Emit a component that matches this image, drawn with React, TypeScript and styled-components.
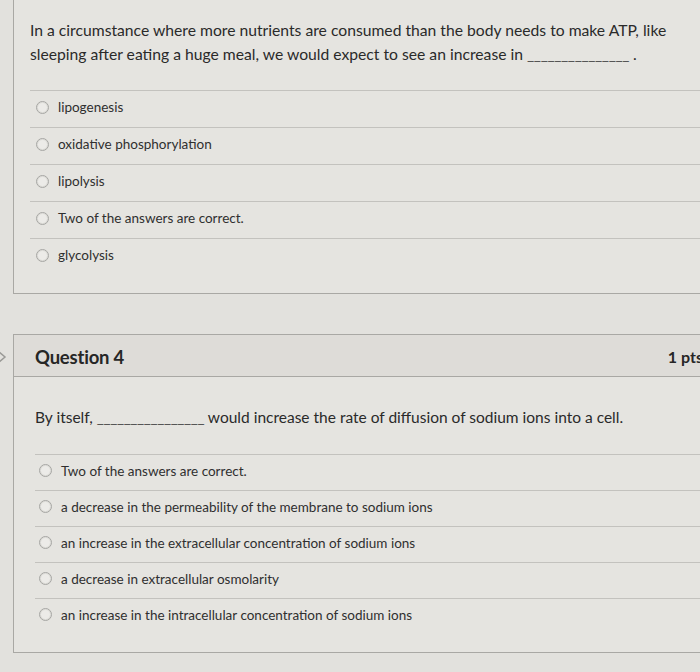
import React from "react";
import styled, { createGlobalStyle } from "styled-components";

const Global = createGlobalStyle`
  html, body { margin: 0; padding: 0; }
  body {
    background: #e2e1dd;
    font-family: Lato, "Open Sans", Arial, sans-serif;
    color: #2e2e2e;
    overflow: hidden;
    width: 700px;
    height: 672px;
  }
`;

const Page = styled.div`
  display: flex;
  flex-direction: column;
  width: 700px;
`;

const QuestionRow = styled.div<{ $gapTop?: number }>`
  display: flex;
  margin-top: ${(p) => p.$gapTop ?? 0}px;
`;

const Gutter = styled.div`
  width: 13px;
  flex: none;
  display: flex;
  flex-direction: column;
`;

const ChevronSlot = styled.div`
  height: 46px;
  display: flex;
  align-items: center;
`;

const Card = styled.div<{ $open?: boolean }>`
  flex: none;
  width: 694px;
  background: #e5e4e0;
  border: 1px solid #a9a8a4;
  border-top-width: ${(p) => (p.$open ? 0 : 1)}px;
`;

const Header = styled.div`
  height: 42px;
  display: flex;
  align-items: center;
  justify-content: space-between;
  padding: 2px 5px 0 21px;
  box-sizing: border-box;
  background: #dedcd8;
  border-bottom: 1px solid #a9a8a4;
`;

const Title = styled.div`
  font-size: 18.5px;
  font-weight: 700;
  color: #262626;
  letter-spacing: -0.2px;
`;

const Points = styled.div`
  font-size: 16px;
  font-weight: 700;
  color: #262626;
  white-space: nowrap;
`;

const Body = styled.div<{ $pt: number; $pl: number }>`
  padding: ${(p) => p.$pt}px 0 18px ${(p) => p.$pl}px;
`;

const Prompt = styled.div<{ $gap: number; $size: number }>`
  font-size: ${(p) => p.$size}px;
  line-height: 24px;
  color: #2a2a2a;
  padding-right: 20px;
  margin-bottom: ${(p) => p.$gap}px;
`;

const Blank = styled.span`
  letter-spacing: -0.4px;
  color: #555;
`;

const Answers = styled.div``;

const Answer = styled.div<{ $h: number; $pl: number }>`
  height: ${(p) => p.$h}px;
  box-sizing: border-box;
  border-top: 1px solid #c3c2be;
  display: flex;
  align-items: center;
  padding-left: ${(p) => p.$pl}px;
  padding-bottom: 4px;
  gap: 9px;
  font-size: 13.5px;
  color: #2f2f2f;
`;

const Radio = styled.span`
  width: 11px;
  height: 11px;
  border-radius: 50%;
  border: 1px solid #a6a6a3;
  background: #ecebe8;
  box-shadow: inset 0 0 0 1px #dcdbd7;
  flex: none;
`;

const q1 = [
  "lipogenesis",
  "oxidative phosphorylation",
  "lipolysis",
  "Two of the answers are correct.",
  "glycolysis",
];

const q4 = [
  "Two of the answers are correct.",
  "a decrease in the permeability of the membrane to sodium ions",
  "an increase in the extracellular concentration of sodium ions",
  "a decrease in extracellular osmolarity",
  "an increase in the intracellular concentration of sodium ions",
];

export default function App() {
  return (
    <>
      <Global />
      <Page>
        <QuestionRow>
          <Gutter />
          <Card $open>
            <Body $pt={18} $pl={16}>
              <Prompt $gap={24} $size={15.7}>
                In a circumstance where more nutrients are consumed than the body needs to make ATP, like
                sleeping after eating a huge meal, we would expect to see an increase in{" "}
                <Blank>_______________</Blank> .
              </Prompt>
              <Answers>
                {q1.map((a) => (
                  <Answer key={a} $h={37} $pl={6}>
                    <Radio />
                    <span>{a}</span>
                  </Answer>
                ))}
              </Answers>
            </Body>
          </Card>
        </QuestionRow>
        <QuestionRow $gapTop={40}>
          <Gutter>
            <ChevronSlot>
              <svg width="13" height="16" viewBox="0 0 13 16" style={{ overflow: "visible" }}>
                <path d="M-2 2 L5 8 L-2 14" fill="none" stroke="#9a9a97" strokeWidth="1.5" />
              </svg>
            </ChevronSlot>
          </Gutter>
          <Card>
            <Header>
              <Title>Question 4</Title>
              <Points>1 pts</Points>
            </Header>
            <Body $pt={28} $pl={21}>
              <Prompt $gap={25} $size={15.5}>
                By itself, <Blank>________________</Blank> would increase the rate of diffusion of sodium ions into a cell.
              </Prompt>
              <Answers>
                {q4.map((a) => (
                  <Answer key={a} $h={36} $pl={4}>
                    <Radio />
                    <span>{a}</span>
                  </Answer>
                ))}
              </Answers>
            </Body>
          </Card>
        </QuestionRow>
      </Page>
    </>
  );
}
